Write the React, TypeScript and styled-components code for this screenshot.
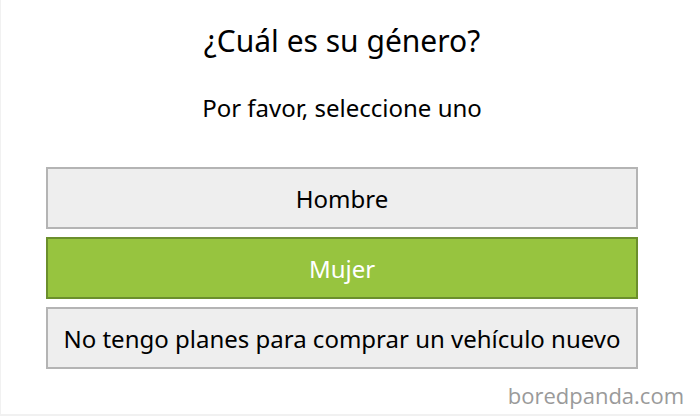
import styled, { createGlobalStyle } from "styled-components";

const GlobalStyle = createGlobalStyle`
  html, body {
    margin: 0;
    padding: 0;
    background: #ffffff;
  }
`;

type Option = {
  label: string;
  selected?: boolean;
};

const options: Option[] = [
  { label: "Hombre" },
  { label: "Mujer", selected: true },
  { label: "No tengo planes para comprar un vehículo nuevo" },
];

export default function App() {
  return (
    <>
      <GlobalStyle />
      <Page>
        <Title>¿Cuál es su género?</Title>
        <Subtitle>Por favor, seleccione uno</Subtitle>
        <OptionList>
          {options.map((option) => (
            <OptionButton key={option.label} selected={!!option.selected}>
              {option.label}
            </OptionButton>
          ))}
        </OptionList>
        <Footer>
          <Watermark>boredpanda.com</Watermark>
        </Footer>
      </Page>
    </>
  );
}

const Page = styled.div`
  display: flex;
  flex-direction: column;
  align-items: center;

  width: 700px;
  height: 416px;
  box-sizing: border-box;
  padding: 21px 16px 0 0;

  font-family: "Noto Sans", "Open Sans", sans-serif;
  color: #000000;
  background: #ffffff;
  box-shadow: inset 0 -3px 0 -1px #f1f1f1, inset 2px 0 0 -1px #f1f1f1;
`;

const Title = styled.h1`
  margin: 0;
  height: 40px;
  line-height: 40px;
  font-size: 30px;
  font-weight: 400;
`;

const Subtitle = styled.p`
  margin: 31px 0 0;
  height: 32px;
  line-height: 32px;
  font-size: 24px;
`;

const OptionList = styled.div`
  display: flex;
  flex-direction: column;
  gap: 8px;

  width: 592px;
  margin-top: 43px;
`;

const OptionButton = styled.button<{ selected: boolean }>`
  display: flex;
  align-items: center;
  justify-content: center;

  height: 62px;
  padding: 0;
  box-sizing: border-box;

  font-family: inherit;
  font-size: 24px;
  color: ${(p) => (p.selected ? "#ffffff" : "#000000")};
  background: ${(p) => (p.selected ? "#97c43f" : "#eeeeee")};
  border: 2px solid ${(p) => (p.selected ? "#6b8f2c" : "#b4b4b4")};
  border-radius: 0;
`;

const Footer = styled.div`
  display: flex;
  justify-content: flex-end;
  align-self: stretch;
  margin-top: auto;
  padding-bottom: 6px;
`;

const Watermark = styled.span`
  font-family: "Open Sans", "Noto Sans", sans-serif;
  font-size: 22px;
  color: #9a9a9a;
`;
